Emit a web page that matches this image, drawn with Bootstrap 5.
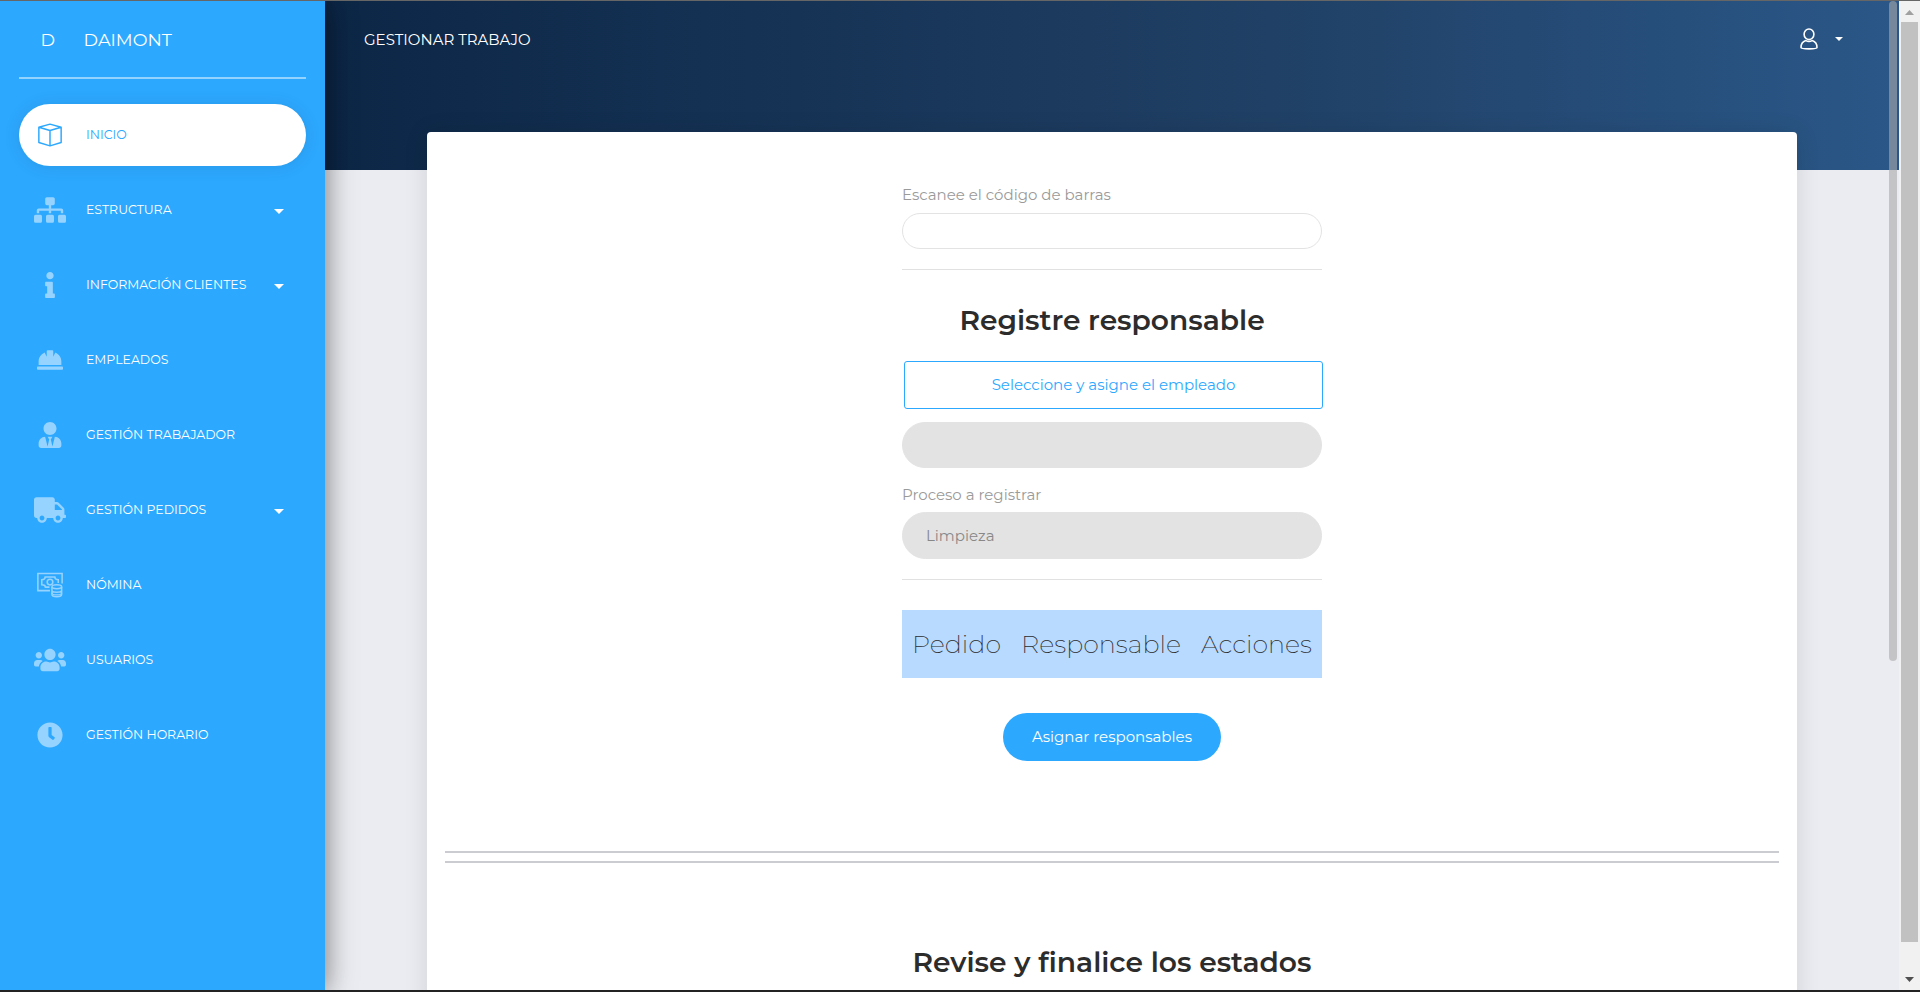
<!DOCTYPE html>
<html lang="es">
<head>
<meta charset="utf-8">
<title>Gestionar trabajo</title>
<link rel="stylesheet" href="https://cdn.jsdelivr.net/npm/bootstrap@5.3.0/dist/css/bootstrap.min.css">
<style>
html,body{height:100%;overflow:hidden}
body{font-family:Montserrat,Inter,sans-serif;font-size:15px;background:#ebecf1;color:#2c2c2c;border-top:1px solid #666;border-bottom:2px solid #232323}
.side{width:325px;background:#2ca8ff;box-shadow:0 2px 22px 0 rgba(0,0,0,.2),0 2px 30px 0 rgba(0,0,0,.35);z-index:3;padding:0 19px}
.brand{height:78px;border-bottom:2px solid #95d3ff;font-size:17.6px;color:#fff;padding:3px 22px 0 21.5px;margin-bottom:25px}
.brand .word{margin-left:28.5px}
.side .nav{gap:13px}
.side .nav-link{height:62px;padding:0 22px 0 15px;color:#fff;font-size:12.5px;border-radius:31px}
.side .nav-link .ico{width:32px;height:26px;margin-right:20px;color:#96d3ff;flex:none}
.side .nav-link.active{background:#fff;color:#2ca8ff;box-shadow:0 1px 15px 1px rgba(39,39,39,.1)}
.side .nav-link.active .ico{color:#2ca8ff}
.drop{border:5px solid transparent;border-top-color:#fff;border-bottom:0;margin-left:auto;margin-top:3px}
.band{height:169px;background:linear-gradient(90deg,#0c2646 0%,#204065 60%,#2a5788 100%);padding:0 56px 0 39px}
.band .bar{height:78px;color:#fff}
.band .user{gap:17px;padding-bottom:2px}
.band .user .drop{border-width:4px 4px 0;margin-top:0}
.panel{margin:-38px 102px 0;border:0;border-radius:4px;box-shadow:0 1px 25px rgba(0,0,0,.11);height:900px;padding:52px 18px 0}
.form{width:420px}
.lbl{color:#9a9a9a;line-height:22px}
.pill{border:1px solid #e3e3e3;border-radius:24px}
.scan{height:36px;margin-top:7px}
.pill.off{background:#e3e3e3;color:#888;padding:1px 23px 0}
.emp{height:46px;margin:13px 0 16px}
.proc{height:47px;margin-top:6px}
.rule{height:1px;background:#e1e1e1;margin-top:20px}
h2{font-size:28.1px;font-weight:600;line-height:34px;margin:33px 0 0;text-align:center;white-space:nowrap}
.pick{border:1px solid #2ca8ff;color:#2ca8ff;border-radius:3px;height:48px;font-size:15px;margin:24px -1px 0 2px}
.heads{height:68px;background:#b8daff;font-size:25.4px;font-weight:200;padding:0 10px;margin-top:30px}
.go{background:#2ca8ff;color:#fff;border-radius:24px;height:48px;width:218px;font-size:15px;margin:35px auto 90px;border:0;padding:0}
.dbl{height:2px;background:#cbccd2;margin-bottom:8px}
.last{margin-top:74px}
.inner{width:8px;height:660px;right:2px;top:0;border-radius:4px;background:rgba(170,170,170,.6)}
.scroll{width:21px;background:#f1f1f1;padding:9px 2px 8px}
.thumb{width:17px;height:920px;background:#c1c1c1;margin-top:7px}
</style>
</head>
<body>
<div class="d-flex h-100">
<aside class="side d-flex flex-column flex-shrink-0">
<div class="brand d-flex align-items-center"><span>D</span><span class="word">DAIMONT</span></div>
<nav class="nav flex-column flex-nowrap">
<a class="nav-link d-flex align-items-center active"><svg class="ico" viewBox="0 0 33 26" fill="none" stroke="currentColor" stroke-width="1.5" stroke-linejoin="round"><path d="M16.500 1.800 28 5V20.800L16.500 24.200 5 20.800V5zM5 5 16.500 8.400 28 5M16.500 8.400V24"/></svg>INICIO</a>
<a class="nav-link d-flex align-items-center"><svg class="ico" viewBox="0 0 640 512" fill="currentColor"><path d="M128 352H32c-17.670 0-32 14.330-32 32v96c0 17.670 14.330 32 32 32h96c17.670 0 32-14.330 32-32v-96c0-17.670-14.330-32-32-32zm-24-80h192v48h48v-48h192v48h48v-57.590c0-21.170-17.230-38.410-38.410-38.410H344v-64h40c17.670 0 32-14.330 32-32V32c0-17.670-14.330-32-32-32H256c-17.670 0-32 14.330-32 32v96c0 17.670 14.330 32 32 32h40v64H94.410C73.230 224 56 241.230 56 262.410V320h48v-48zm264 80h-96c-17.670 0-32 14.330-32 32v96c0 17.670 14.330 32 32 32h96c17.670 0 32-14.330 32-32v-96c0-17.670-14.330-32-32-32zm240 0h-96c-17.670 0-32 14.330-32 32v96c0 17.670 14.330 32 32 32h96c17.670 0 32-14.330 32-32v-96c0-17.670-14.330-32-32-32z"/></svg>ESTRUCTURA<i class="drop"></i></a>
<a class="nav-link d-flex align-items-center"><svg class="ico" viewBox="0 0 192 512" fill="currentColor"><path d="M20 424.229h20V279.771H20c-11.046 0-20-8.954-20-20V212c0-11.046 8.954-20 20-20h112c11.046 0 20 8.954 20 20v212.229h20c11.046 0 20 8.954 20 20V492c0 11.046-8.954 20-20 20H20c-11.046 0-20-8.954-20-20v-47.771c0-11.046 8.954-20 20-20zM96 0C56.235 0 24 32.235 24 72s32.235 72 72 72 72-32.235 72-72S135.764 0 96 0z"/></svg>INFORMACIÓN CLIENTES<i class="drop"></i></a>
<a class="nav-link d-flex align-items-center"><svg class="ico" viewBox="0 0 512 512" fill="currentColor"><path d="M480 288c0-80.250-49.280-148.920-119.190-177.620L320 192V80a16 16 0 0 0-16-16h-96a16 16 0 0 0-16 16v112l-40.810-81.620C81.280 139.080 32 207.750 32 288v64h448zm16 96H16a16 16 0 0 0-16 16v32a16 16 0 0 0 16 16h480a16 16 0 0 0 16-16v-32a16 16 0 0 0-16-16z"/></svg>EMPLEADOS</a>
<a class="nav-link d-flex align-items-center"><svg class="ico" viewBox="0 0 448 512" fill="currentColor"><path d="M224 256c70.700 0 128-57.300 128-128S294.700 0 224 0 96 57.300 96 128s57.300 128 128 128zm95.800 32.600L272 480l-32-136 32-56h-96l32 56-32 136-47.800-191.400C56.900 292 0 350.300 0 422.400V464c0 26.500 21.500 48 48 48h352c26.500 0 48-21.500 48-48v-41.600c0-72.100-56.900-130.400-128.200-133.800z"/></svg>GESTIÓN TRABAJADOR</a>
<a class="nav-link d-flex align-items-center"><svg class="ico" viewBox="0 0 640 512" fill="currentColor"><path d="M624 352h-16V243.900c0-12.700-5.100-24.900-14.100-33.900L494 110.100c-9-9-21.200-14.100-33.900-14.100H416V48c0-26.500-21.500-48-48-48H48C21.500 0 0 21.500 0 48v320c0 26.500 21.500 48 48 48h16c0 53 43 96 96 96s96-43 96-96h128c0 53 43 96 96 96s96-43 96-96h48c8.800 0 16-7.200 16-16v-32c0-8.800-7.200-16-16-16zM160 464c-26.500 0-48-21.500-48-48s21.500-48 48-48 48 21.500 48 48-21.500 48-48 48zm320 0c-26.500 0-48-21.500-48-48s21.500-48 48-48 48 21.500 48 48-21.500 48-48 48zm80-208H416V144h44.100l99.900 99.900V256z"/></svg>GESTIÓN PEDIDOS<i class="drop"></i></a>
<a class="nav-link d-flex align-items-center"><svg class="ico" viewBox="0 0 33 26" fill="none" stroke="currentColor" stroke-width="1.6"><path d="M16.500 18.800H4V1.200H29V11.500M16 15.200H11.800C11.800 13.700 10 12.700 8 12.700V7.500C10 7.500 11.500 6.500 11.500 4.800H21.500C21.500 6.500 23 7.500 25 7.500V11"/><circle cx="16.500" cy="10" r="2.900"/><ellipse cx="23.500" cy="14.800" rx="5" ry="2"/><path d="M18.500 15V22.500C18.500 25.900 28.500 25.900 28.500 22.500V15M18.500 18.500C18.500 21.200 28.500 21.200 28.500 18.500"/><path d="M18.500 21.300C18.500 23.800 28.500 23.800 28.500 21.300" stroke-width="1.200"/></svg>NÓMINA</a>
<a class="nav-link d-flex align-items-center"><svg class="ico" viewBox="0 0 640 512" fill="currentColor"><path d="M96 224c35.300 0 64-28.700 64-64s-28.700-64-64-64-64 28.700-64 64 28.700 64 64 64zm448 0c35.300 0 64-28.700 64-64s-28.700-64-64-64-64 28.700-64 64 28.700 64 64 64zm32 32h-64c-17.600 0-33.500 7.100-45.100 18.600 40.300 22.100 68.900 62 75.100 109.400h66c17.700 0 32-14.300 32-32v-32c0-35.300-28.700-64-64-64zm-256 0c61.900 0 112-50.100 112-112S381.900 32 320 32 208 82.100 208 144s50.100 112 112 112zm76.800 32h-8.300c-20.800 10-43.900 16-68.500 16s-47.600-6-68.500-16h-8.300C179.600 288 128 339.600 128 403.200V432c0 26.500 21.500 48 48 48h288c26.500 0 48-21.500 48-48v-28.800c0-63.600-51.600-115.200-115.200-115.200zm-223.700-13.400C161.500 263.100 145.600 256 128 256H64c-35.300 0-64 28.700-64 64v32c0 17.700 14.300 32 32 32h65.900c6.300-47.400 34.900-87.300 75.200-109.400z"/></svg>USUARIOS</a>
<a class="nav-link d-flex align-items-center"><svg class="ico" viewBox="0 0 512 512" fill="currentColor"><path d="M256,8C119,8,8,119,8,256S119,504,256,504,504,393,504,256,393,8,256,8Zm92.490,313h0l-20,25a16,16,0,0,1-22.490,2.500h0l-67-49.720a40,40,0,0,1-15-31.230V112a16,16,0,0,1,16-16h32a16,16,0,0,1,16,16V256l58,42.500A16,16,0,0,1,348.490,321Z"/></svg>GESTIÓN HORARIO</a>
</nav>
</aside>
<main class="flex-grow-1 position-relative overflow-hidden">
<div class="band"><div class="bar d-flex align-items-center"><span class="me-auto">GESTIONAR TRABAJO</span>
<div class="user d-flex align-items-center"><svg width="18" height="22" viewBox="0 0 18 22" fill="none" stroke="#fff" stroke-width="1.6"><ellipse cx="9" cy="6.300" rx="4.900" ry="5.300"/><path d="M5.800 12.600C3 13.600 1 16 1 19.500C1 21.300 17 21.300 17 19.500C17 16 15 13.600 12.200 12.600C10.500 13.500 7.500 13.500 5.800 12.600z"/></svg>
<i class="drop"></i></div></div></div>
<section class="panel card">
<div class="form mx-auto">
<div class="lbl">Escanee el código de barras</div>
<div class="pill scan"></div>
<div class="rule"></div>
<h2>Registre responsable</h2>
<div class="pick d-flex align-items-center justify-content-center">Seleccione y asigne el empleado</div>
<div class="pill off emp"></div>
<div class="lbl">Proceso a registrar</div>
<div class="pill off proc d-flex align-items-center">Limpieza</div>
<div class="rule"></div>
<div class="heads d-flex justify-content-between align-items-center"><span>Pedido</span><span>Responsable</span><span>Acciones</span></div>
<button class="go d-block">Asignar responsables</button>
</div>
<div class="dbl"></div><div class="dbl"></div>
<h2 class="last">Revise y finalice los estados</h2>
</section>
<div class="inner position-absolute"></div>
</main>
<div class="scroll d-flex flex-column align-items-center flex-shrink-0">
<svg class="flex-shrink-0" width="9" height="5" viewBox="0 0 9 5"><path d="M4.500 0 9 5H0z" fill="#a0a0a0"/></svg>
<div class="thumb flex-shrink-0"></div>
<svg class="mt-auto flex-shrink-0" width="9" height="5" viewBox="0 0 9 5"><path d="M4.500 5 9 0H0z" fill="#505050"/></svg>
</div>
</div>
<script src="https://cdn.jsdelivr.net/npm/bootstrap@5.3.0/dist/js/bootstrap.bundle.min.js"></script>
</body>
</html>
